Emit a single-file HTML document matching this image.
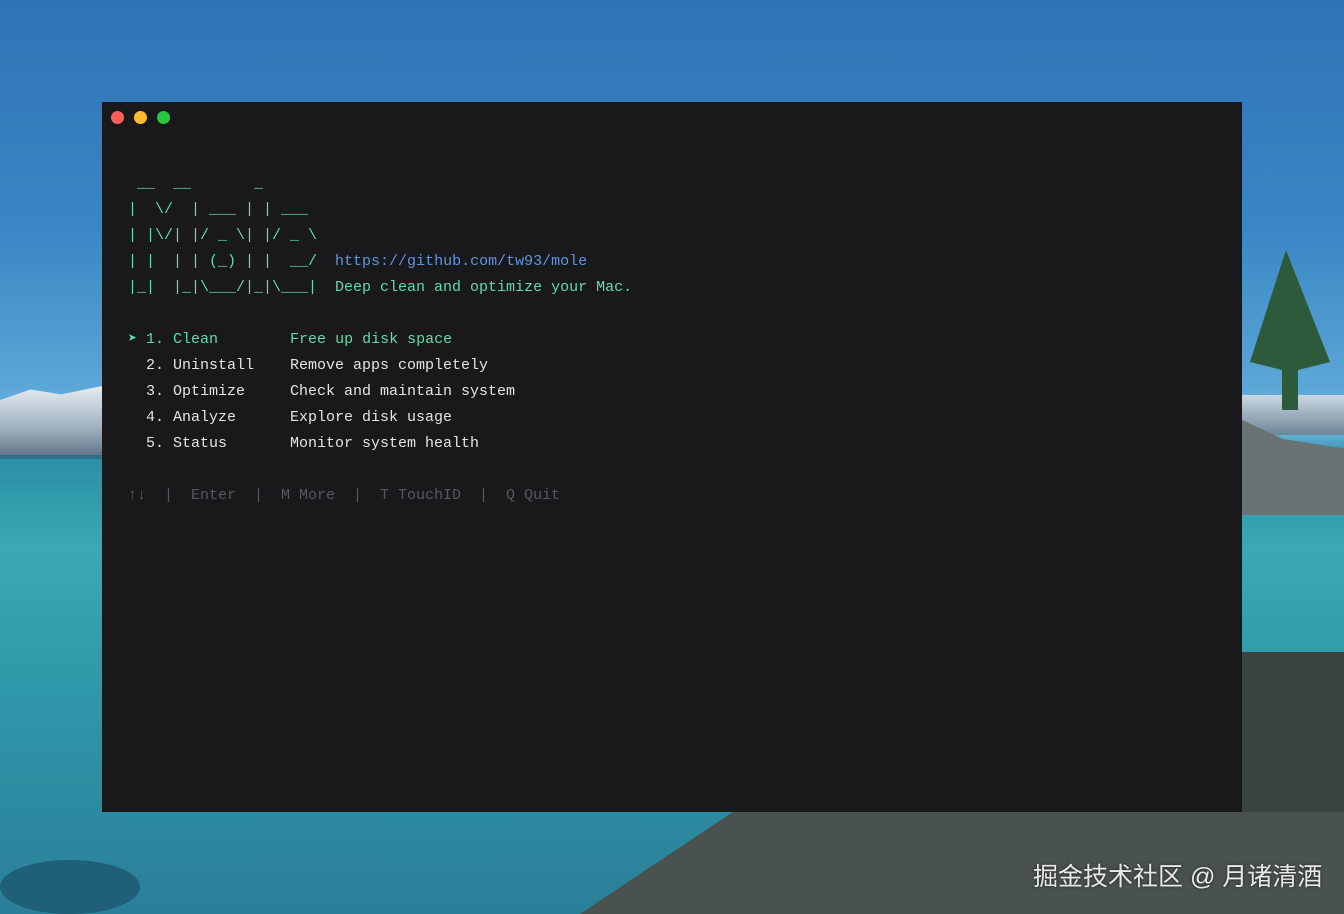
<!DOCTYPE html>
<html><head><meta charset="utf-8"><style>
html,body{margin:0;padding:0;width:1344px;height:914px;overflow:hidden;position:relative;
background:linear-gradient(180deg,#2f74b4 0%,#3a86c4 25%,#5aa6d6 42%,#6fb6df 47%,#2b8fa6 50%,#3aa9b4 60%,#2f98aa 75%,#2a7f98 100%);}
.abs{position:absolute}
.win{left:102px;top:102px;width:1140px;height:710px;background:#19191c}
.dot{position:absolute;top:111px;width:13px;height:13px;border-radius:50%}
pre{margin:0;position:absolute;font-family:"Liberation Mono",monospace;font-size:15px;line-height:26px;white-space:pre}
.g{color:#5fdcaa}.b{color:#5e95e0}.w{color:#e4e4e4}.d{color:#58585c}
</style></head><body>
<div class="abs" style="left:0;top:386px;width:102px;height:70px;background:linear-gradient(180deg,#e6edf2,#9fb0bf 60%,#5f7688);clip-path:polygon(0 20%,30% 5%,60% 12%,100% 0,100% 100%,0 100%)"></div>
<div class="abs" style="left:0;top:455px;width:102px;height:4px;background:#2c6f8a"></div>
<div class="abs" style="left:1242px;top:395px;width:102px;height:40px;background:linear-gradient(180deg,#c9d7e2,#6d8598)"></div>
<div class="abs" style="left:1242px;top:420px;width:102px;height:95px;background:#6b7273;clip-path:polygon(0 0,40% 20%,100% 30%,100% 100%,0 100%)"></div>
<div class="abs" style="left:1250px;top:250px;width:80px;height:160px;background:#2d5a3a;clip-path:polygon(45% 0,100% 70%,60% 75%,60% 100%,40% 100%,40% 75%,0 70%)"></div>
<div class="abs" style="left:1242px;top:652px;width:102px;height:262px;background:#3a4442"></div>
<div class="abs" style="left:580px;top:812px;width:764px;height:102px;background:#4a5250;clip-path:polygon(20% 0,100% 0,100% 100%,0 100%)"></div>
<div class="abs" style="left:0;top:860px;width:140px;height:54px;background:#1f5f78;border-radius:50%"></div>
<div class="abs win"></div>
<div class="dot" style="left:111px;background:#fe5f57"></div>
<div class="dot" style="left:134px;background:#febc2e"></div>
<div class="dot" style="left:157px;background:#28c840"></div>
<pre class="g" style="left:128px;top:171px"> __  __       _
|  \/  | ___ | | ___
| |\/| |/ _ \| |/ _ \
| |  | | (_) | |  __/  <span class="b">https://github.com/tw93/mole</span>
|_|  |_|\___/|_|\___|  Deep clean and optimize your Mac.

<span class="g">➤ 1. Clean        Free up disk space</span>
<span class="w">  2. Uninstall    Remove apps completely
  3. Optimize     Check and maintain system
  4. Analyze      Explore disk usage
  5. Status       Monitor system health</span>

<span class="d">↑↓  |  Enter  |  M More  |  T TouchID  |  Q Quit</span></pre>
<div class="abs" style="left:1033px;top:857px;font-family:'Liberation Sans','Noto Sans CJK SC',sans-serif;font-size:25px;color:#e8e8e8;text-shadow:0 0 3px rgba(0,0,0,.6)">掘金技术社区 @ 月诸清酒</div>
</body></html>
